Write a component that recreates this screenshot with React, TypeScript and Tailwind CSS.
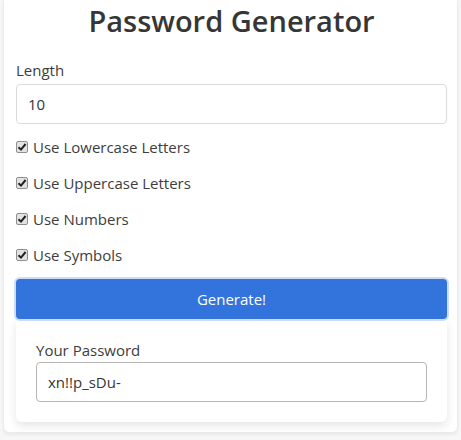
import React from "react";

function Check({ label }: { label: string }) {
  return (
    <label className="flex items-center h-[36px]">
      <span className="w-[12px] h-[12px] rounded-[2px] border border-[#8f8f8f] bg-[#e3e3e3] flex items-center justify-center">
        <svg width="10" height="10" viewBox="0 0 10 10">
          <path d="M1.5 5.2 L4 7.6 L8.6 2" fill="none" stroke="#222" strokeWidth="2" />
        </svg>
      </span>
      <span className="ml-[5px] text-[15px] text-[#3d3d3d]">{label}</span>
    </label>
  );
}

export default function App() {
  return (
    <div className="w-[461px] h-[440px] bg-[#f7f7f7] overflow-hidden" style={{ fontFamily: '"Open Sans", "Noto Sans", sans-serif' }}>
      <div className="mx-[3px] bg-white border border-t-0 border-[#ececec] rounded-b-[6px] shadow-[0_2px_3px_rgba(0,0,0,0.06)] pl-[12px] pr-[10px] pb-[10px]">
        <h1 className="text-center text-[29px] leading-[40px] font-semibold text-[#363636] pt-[1px]">Password Generator</h1>
        <div className="mt-[19px] text-[15px] leading-[20px] text-[#3d3d3d]">Length</div>
        <div className="mt-[4px] h-[40px] border border-[#dbdbdb] rounded-[4px] flex items-center px-[11px] text-[15px] text-[#363636]">10</div>
        <div className="mt-[5px]">
          <Check label="Use Lowercase Letters" />
          <Check label="Use Uppercase Letters" />
          <Check label="Use Numbers" />
          <Check label="Use Symbols" />
        </div>
        <button className="mt-[6px] w-full h-[40px] rounded-[4px] bg-[#3273dc] text-white text-[15px] shadow-[0_0_0_2px_rgba(50,115,220,0.25)]">Generate!</button>
        <div className="bg-white rounded-b-[6px] shadow-[0_4px_10px_rgba(10,10,10,0.1)] px-[20px] pt-[21px] pb-[20px]">
          <div className="text-[15px] leading-[20px] text-[#3d3d3d]">Your Password</div>
          <div className="mt-[2px] h-[40px] border border-[#b5b5b5] rounded-[4px] flex items-center px-[11px] text-[15px] text-[#363636]">xn!!p_sDu-</div>
        </div>
      </div>
    </div>
  );
}
